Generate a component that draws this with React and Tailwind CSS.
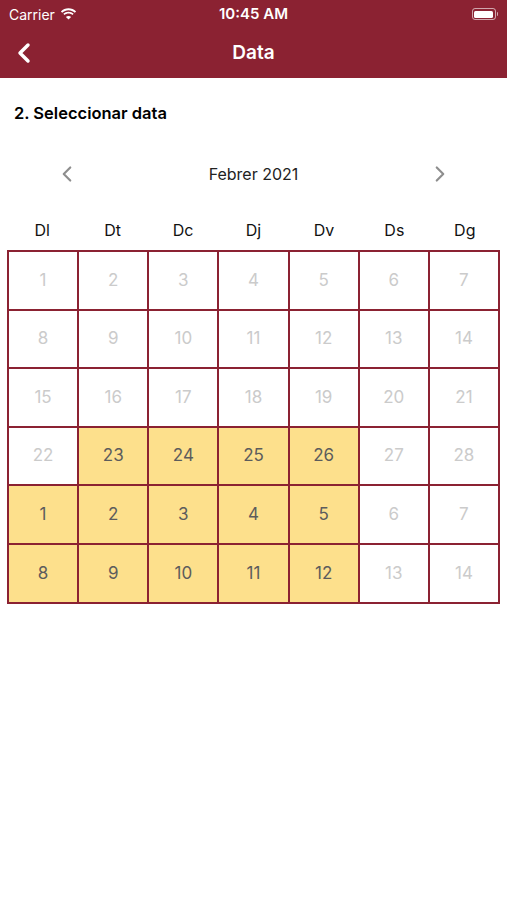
import { ChevronLeft, ChevronRight } from 'lucide-react';

const dayNames = ['Dl', 'Dt', 'Dc', 'Dj', 'Dv', 'Ds', 'Dg'];

const weeks = [
    [1, 2, 3, 4, 5, 6, 7],
    [8, 9, 10, 11, 12, 13, 14],
    [15, 16, 17, 18, 19, 20, 21],
    [22, 23, 24, 25, 26, 27, 28],
    [1, 2, 3, 4, 5, 6, 7],
    [8, 9, 10, 11, 12, 13, 14],
];

// week row index -> columns that are selectable
const isActive = (row, col) => row >= 3 && col <= 4 && !(row === 3 && col === 0);

function StatusBar() {
    return (
        <div className="relative flex h-[28px] items-center px-[9px] text-white">
            <div className="flex items-center gap-[5px] text-[14px]">
                <span>Carrier</span>
                <svg width="17" height="12" viewBox="0 0 17 12" fill="white">
                    <path d="M8.5 2.2c2.4 0 4.6.9 6.3 2.5l1.3-1.3C14.1 1.4 11.4.3 8.5.3S2.9 1.4.9 3.4l1.3 1.3C3.9 3.1 6.1 2.2 8.5 2.2z" />
                    <path d="M8.5 5.6c1.5 0 2.8.5 3.9 1.5l1.3-1.3C12.3 4.5 10.5 3.7 8.5 3.7S4.7 4.5 3.3 5.8l1.3 1.3c1.1-1 2.4-1.5 3.9-1.5z" />
                    <path d="M8.5 11.6l2.6-2.6c-.7-.6-1.6-1-2.6-1s-1.9.4-2.6 1l2.6 2.6z" />
                </svg>
            </div>
            <div className="absolute left-0 right-0 text-center text-[15px] font-semibold">10:45 AM</div>
            <div className="ml-auto flex items-center">
                <div className="h-[12px] w-[24px] rounded-[3px] border border-white/60 p-[1.5px]">
                    <div className="h-full w-full rounded-[1.5px] bg-white" />
                </div>
                <div className="ml-[1px] h-[4px] w-[1.5px] rounded-r bg-white/60" />
            </div>
        </div>
    );
}

export default function App() {
    return (
        <div
            className="min-h-[900px] w-[507px] bg-white"
            style={{ fontFamily: 'Inter, "Liberation Sans", sans-serif' }}
        >
            <div className="bg-[#8b2232]">
                <StatusBar />
                <div className="relative flex h-[50px] items-center">
                    <ChevronLeft className="ml-[8px] text-white" size={32} strokeWidth={2.6} />
                    <div className="absolute left-0 right-0 text-center text-[19px] font-semibold text-white">
                        Data
                    </div>
                </div>
            </div>

            <div className="px-[14px] pt-[24px] text-[16.5px] font-semibold leading-[22px] text-black">
                2. Seleccionar data
            </div>

            <div className="mt-[37px] flex items-center justify-between px-[54px]">
                <ChevronLeft className="text-[#8e8e8e]" size={26} strokeWidth={2} />
                <span className="text-[16px] text-[#222]">Febrer 2021</span>
                <ChevronRight className="text-[#8e8e8e]" size={26} strokeWidth={2} />
            </div>

            <div className="mt-[31px] px-[7px]">
                <div className="grid grid-cols-7">
                    {dayNames.map((d) => (
                        <div key={d} className="text-center text-[16px] text-[#111]">
                            {d}
                        </div>
                    ))}
                </div>

                <div className="mt-[8px] grid grid-cols-7 gap-[2px] bg-[#8b2232] p-[2px]">
                    {weeks.map((week, r) =>
                        week.map((n, c) => {
                            const active = isActive(r, c);
                            return (
                                <div
                                    key={`${r}-${c}`}
                                    className={
                                        active
                                            ? 'flex h-[56.6px] items-center justify-center bg-[#fde08c] text-[17px] text-[#5c5c5c]'
                                            : 'flex h-[56.6px] items-center justify-center bg-white text-[17px] text-[#cbcbcb]'
                                    }
                                >
                                    {n}
                                </div>
                            );
                        }),
                    )}
                </div>
            </div>
        </div>
    );
}
